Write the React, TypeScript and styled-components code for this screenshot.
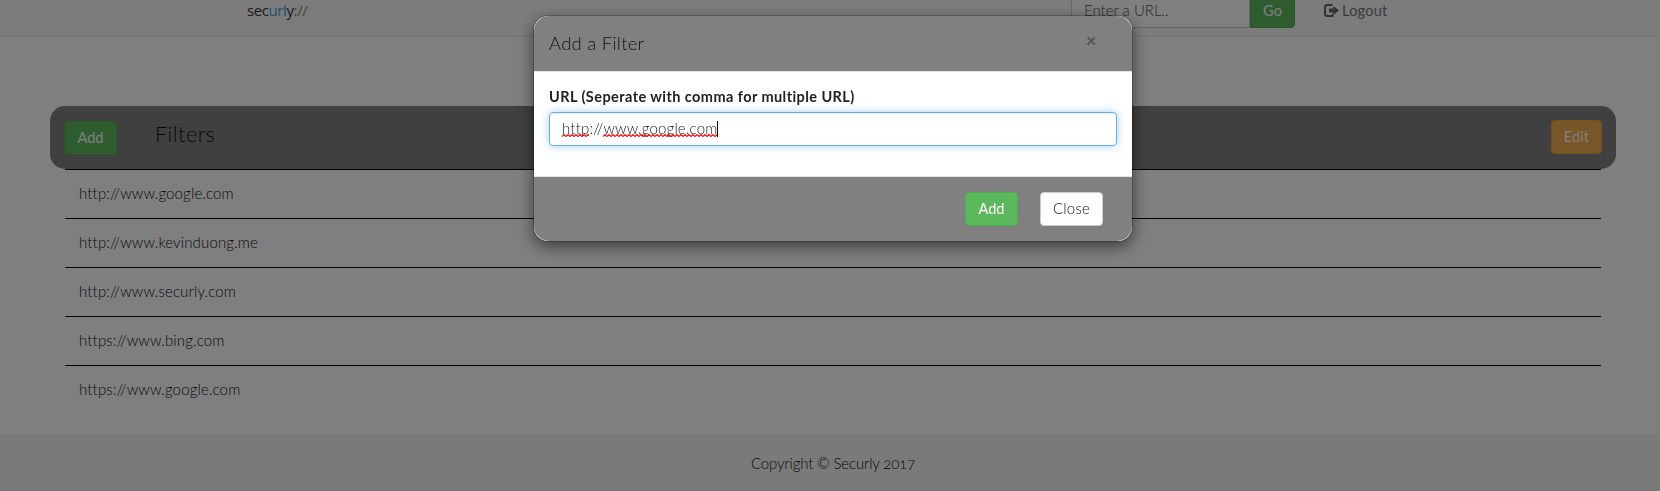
import React from "react";
import styled, { createGlobalStyle } from "styled-components";

const GlobalStyle = createGlobalStyle`
  * { box-sizing: border-box; }
  html, body { margin: 0; padding: 0; }
  body {
    height: 491px;
    overflow: hidden;
    background: #fff;
    color: #111;
    font: 300 15px/20px Lato, "Open Sans", sans-serif;
    font-variant-ligatures: none;
  }
`;

const Page = styled.div`
  display: flex;
  flex-direction: column;
  height: 491px;
`;

const Navbar = styled.nav`
  display: flex;
  height: 37px;
  flex: none;
  padding-left: 247px;
  background: #f8f8f8;
  border-bottom: 1px solid #e7e7e7;
`;

const Logo = styled.div`
  width: 824px;
  font: 400 15px/20px "Open Sans", sans-serif;
  letter-spacing: -0.4px;
  color: #333;
`;

const LogoPart = styled.span<{ $tone: string }>`
  color: ${(p) => p.$tone};
`;

const UrlField = styled.div`
  width: 179px;
  height: 34px;
  margin-top: -6px;
  padding: 5px 12px;
  border: 1px solid #ccc;
  background: #fff;
  color: #555;
  letter-spacing: 0;
`;

const variants = {
  success: { bg: "#5cb85c", line: "#4cae4c", ink: "#fff" },
  warning: { bg: "#f0ad4e", line: "#eea236", ink: "#fff" },
  plain: { bg: "#fff", line: "#ccc", ink: "#111" },
};

const Button = styled.button<{ $kind: keyof typeof variants; $width: number }>`
  width: ${(p) => p.$width}px;
  height: 34px;
  padding: ${(p) => (p.$kind === "plain" ? "0 0 2px" : "0")};
  border: 1px solid ${(p) => variants[p.$kind].line};
  border-radius: 4px;
  background: ${(p) => variants[p.$kind].bg};
  color: ${(p) => variants[p.$kind].ink};
  font: inherit;
  font-size: ${(p) => (p.$kind === "plain" ? 15 : 14.5)}px;
  font-weight: ${(p) => (p.$kind === "plain" ? 300 : 400)};
  letter-spacing: ${(p) => (p.$kind === "plain" ? 0.2 : 0.1)}px;
`;

const GoButton = styled(Button)`
  margin-top: -6px;
  border-radius: 0 4px 4px 0;
`;

const Logout = styled.a`
  display: flex;
  height: 20px;
  margin: 1px 0 0 29px;
  gap: 3px;
  color: #777;
  font-size: 14.5px;
  font-weight: 400;
  letter-spacing: 0.25px;

  svg { margin-top: 3px; }
`;

const Main = styled.main`
  height: 397px;
  flex: none;
  padding: 69px 44px 0 50px;
`;

const Toolbar = styled.header`
  display: flex;
  align-items: flex-start;
  height: 63px;
  padding: 14px 14px 0;
  border-radius: 15px;
  background: #808080;
`;

const ToolbarTitle = styled.h3`
  flex: 1;
  margin: 2px 0 0 38px;
  font-size: 21.5px;
  line-height: 24px;
  font-weight: 300;
  letter-spacing: 0.5px;
`;

const AddSlot = styled.div`
  padding-top: 1px;
`;

const FilterList = styled.ul`
  margin: 0 15px;
  padding: 0;
  list-style: none;
`;

const FilterRow = styled.li`
  height: 49px;
  padding: 13px 14px 0;
  border-top: 1px solid #000;
  letter-spacing: 0.15px;
`;

const Footer = styled.footer`
  flex: 1;
  padding: 19px 0 0 6px;
  background: #f5f5f5;
  text-align: center;
  letter-spacing: -0.15px;
  font-feature-settings: "onum" 1;
`;

const Backdrop = styled.div`
  position: fixed;
  inset: 0;
  display: flex;
  align-items: flex-start;
  justify-content: center;
  padding: 15px 0 0 6px;
  background: rgba(0, 0, 0, 0.5);
`;

const Dialog = styled.section`
  width: 600px;
  height: 227px;
  border: 1px solid rgba(0, 0, 0, 0.2);
  border-radius: 15px;
  background: #fff;
  background-clip: padding-box;
  box-shadow: 0 5px 15px rgba(0, 0, 0, 0.5);
`;

const DialogHeader = styled.header`
  display: flex;
  justify-content: space-between;
  height: 56px;
  padding: 15px 36px 0 15px;
  border-bottom: 1px solid #e5e5e5;
  border-radius: 15px 15px 0 0;
  background: #808080;
`;

const DialogTitle = styled.h4`
  margin: 0;
  font-size: 18.5px;
  line-height: 25px;
  font-weight: 300;
  letter-spacing: 0.25px;
`;

const CloseIcon = styled.button`
  height: 20px;
  margin-top: 0;
  padding: 0;
  border: 0;
  background: none;
  color: #000;
  opacity: 0.3;
  font: 900 17px/20px Lato, sans-serif;
  text-shadow: 0 1px 0 #fff;
  -webkit-text-stroke: 0.8px #000;
`;

const DialogBody = styled.div`
  height: 104px;
  padding: 15px;
`;

const Label = styled.label`
  display: block;
  margin-bottom: 5px;
  color: #222;
  font-weight: 700;
  font-size: 14.5px;
  letter-spacing: 0.43px;
`;

const Input = styled.div`
  display: flex;
  height: 34px;
  padding: 5px 12px;
  border: 1px solid #66afe9;
  border-radius: 4px;
  color: #222;
  box-shadow: inset 0 1px 1px rgba(0, 0, 0, 0.075), 0 0 8px rgba(102, 175, 233, 0.6);
  letter-spacing: 0.18px;
`;

const Misspelt = styled.span`
  position: relative;

  svg {
    position: absolute;
    left: 0;
    top: 16px;
    width: 100%;
    height: 3px;
  }
`;

const Caret = styled.span`
  width: 1px;
  height: 16px;
  margin-top: 3px;
  background: #000;
`;

const DialogFooter = styled.footer`
  display: flex;
  justify-content: flex-end;
  gap: 22px;
  height: 65px;
  padding: 15px 29px 0;
  border-top: 1px solid #e5e5e5;
  border-radius: 0 0 15px 15px;
  background: #808080;
`;

const filters = [
  "http://www.google.com",
  "http://www.kevinduong.me",
  "http://www.securly.com",
  "https://www.bing.com",
  "https://www.google.com",
];

function Spelling({ id, children }: { id: string; children: string }) {
  return (
    <Misspelt>
      {children}
      <svg aria-hidden="true">
        <defs>
          <pattern id={id} width="4" height="3" patternUnits="userSpaceOnUse">
            <path d="M-1 1.5 L0 2.5 L2 .5 L4 2.5 L5 1.5" fill="none" stroke="#f00" strokeWidth="1.1" />
          </pattern>
        </defs>
        <rect width="100%" height="3" fill={`url(#${id})`} />
      </svg>
    </Misspelt>
  );
}

function LogoutIcon() {
  return (
    <svg width="15" height="13" viewBox="0 0 15 13" aria-hidden="true">
      <path d="M8.5 1H3.5Q1 1 1 3.5V9.5Q1 12 3.5 12H8.5V9.8" fill="none" stroke="#666" strokeWidth="2" />
      <path d="M5 4.5H9.5V1.9L15 6.5L9.5 11V8.5H5Z" fill="#666" />
    </svg>
  );
}

export default function App() {
  return (
    <>
      <GlobalStyle />
      <Page>
        <Navbar>
          <Logo>
            sec<LogoPart $tone="#3aa5dc">url</LogoPart>y<LogoPart $tone="#888">://</LogoPart>
          </Logo>
          <UrlField>Enter a URL..</UrlField>
          <GoButton $kind="success" $width={45}>Go</GoButton>
          <Logout>
            <LogoutIcon />
            <span>Logout</span>
          </Logout>
        </Navbar>
        <Main>
          <Toolbar>
            <AddSlot>
              <Button $kind="success" $width={53}>Add</Button>
            </AddSlot>
            <ToolbarTitle>Filters</ToolbarTitle>
            <Button $kind="warning" $width={51}>Edit</Button>
          </Toolbar>
          <FilterList>
            {filters.map((url) => (
              <FilterRow key={url}>{url}</FilterRow>
            ))}
          </FilterList>
        </Main>
        <Footer>Copyright © Securly 2017</Footer>
      </Page>
      <Backdrop>
        <Dialog role="dialog">
          <DialogHeader>
            <DialogTitle>Add a Filter</DialogTitle>
            <CloseIcon aria-label="Close">×</CloseIcon>
          </DialogHeader>
          <DialogBody>
            <Label>URL (Seperate with comma for multiple URL)</Label>
            <Input>
              <Spelling id="wave-a">http</Spelling>
              <span>://</span>
              <Spelling id="wave-b">www.google.com</Spelling>
              <Caret />
            </Input>
          </DialogBody>
          <DialogFooter>
            <Button $kind="success" $width={53}>Add</Button>
            <Button $kind="plain" $width={63}>Close</Button>
          </DialogFooter>
        </Dialog>
      </Backdrop>
    </>
  );
}
